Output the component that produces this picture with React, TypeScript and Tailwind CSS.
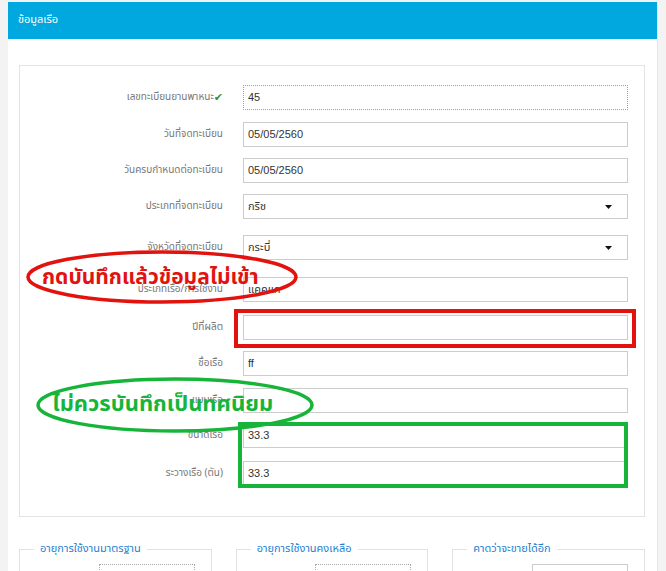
import React from "react"

const font = { fontFamily: "Tahoma, 'Noto Sans Thai', 'Noto Sans', 'DejaVu Sans', sans-serif" }

type Row = { label: string; value?: string; kind?: "dotted" | "select" | "text"; check?: boolean; mt: string }

const rows: Row[] = [
  { label: "เลขทะเบียนยานพาหนะ", value: "45", kind: "dotted", check: true, mt: "mt-[19px]" },
  { label: "วันที่จดทะเบียน", value: "05/05/2560", mt: "mt-[12px]" },
  { label: "วันครบกำหนดต่อทะเบียน", value: "05/05/2560", mt: "mt-[11px]" },
  { label: "ประเภทที่จดทะเบียน", value: "กริช", kind: "select", mt: "mt-[11px]" },
  { label: "จังหวัดที่จดทะเบียน", value: "กระบี่", kind: "select", mt: "mt-[16px]" },
  { label: "ประเภทเรือ/การใช้งาน", value: "แคคแค", mt: "mt-[17px]" },
  { label: "ปีที่ผลิต", value: "", mt: "mt-[13px]" },
  { label: "ชื่อเรือ", value: "ff", mt: "mt-[11px]" },
  { label: "แบบเรือ", value: "", mt: "mt-[12px]" },
  { label: "ขนาดเรือ", value: "33.3", mt: "mt-[10px]" },
  { label: "ระวางเรือ (ตัน)", value: "33.3", mt: "mt-[13px]" },
]

function FormRow({ row }: { row: Row }) {
  const box =
    row.kind === "dotted"
      ? "border border-dotted border-[#9aa59a]"
      : "border border-[#cccccc]"
  return (
    <div className={`flex items-center ${row.mt}`}>
      <div className="w-[203px] text-right text-[10px] text-[#777] flex justify-end items-center" style={font}>
        <span>{row.label}</span>
        {row.check && <span className="text-[#3a8f3a] text-[11px] leading-none">✔</span>}
      </div>
      <div className={`ml-[20px] w-[385px] h-[25px] bg-white flex items-center justify-between pl-[4px] pr-[15px] text-[11px] text-[#333] ${box}`} style={{ fontFamily: "'Liberation Sans', Tahoma, 'Noto Sans Thai', sans-serif" }}>
        <span>{row.value}</span>
        {row.kind === "select" && (
          <svg width="7" height="4" viewBox="0 0 7 4"><path d="M0 0h7L3.5 4z" fill="#111" /></svg>
        )}
      </div>
    </div>
  )
}

function Group({ title, boxClass }: { title: string; boxClass: string }) {
  return (
    <fieldset className="border border-[#e2e2e2] pl-[14px] pr-[16px] h-[60px] min-w-0">
      <legend className="px-[6px] text-[11px] text-[#1f7fd1]" style={font}>{title}</legend>
      <div className="flex justify-end mt-[6px]">
        <div className={`w-[96px] h-[20px] ${boxClass}`} />
      </div>
    </fieldset>
  )
}

export default function App() {
  return (
    <div className="relative w-[666px] h-[571px] overflow-hidden bg-[#f3f3f3] pt-[2px] pl-[8px] pr-[8px]" style={font}>
      <div className="bg-white h-[600px] border-r border-[#e8e8e8]">
        <div className="h-[37px] bg-[#00a8df] flex items-center pl-[10px] text-[11px] text-white">ข้อมูลเรือ</div>
        <div className="pl-[11px] pr-[12px] pt-[26px]">
          <div className="h-[452px] border border-[#e3e3e3] flex flex-col">
            {rows.map((r) => (
              <FormRow key={r.label} row={r} />
            ))}
          </div>
          <div className="grid grid-cols-3 gap-x-[24px] mt-[24px]">
            <Group title="อายุการใช้งานมาตรฐาน" boxClass="border border-dotted border-[#aaa]" />
            <Group title="อายุการใช้งานคงเหลือ" boxClass="border border-dotted border-[#aaa]" />
            <Group title="คาดว่าจะขายได้อีก" boxClass="border border-[#ccc]" />
          </div>
        </div>
      </div>

      {/* annotations */}
      <svg className="absolute left-0 top-0 pointer-events-none" width="666" height="571">
        <ellipse cx="162" cy="277" rx="134" ry="25" fill="none" stroke="#e2130f" strokeWidth="3.5" />
        <ellipse cx="175" cy="405" rx="137" ry="26" fill="none" stroke="#16b53a" strokeWidth="3.5" />
      </svg>
      <div className="absolute left-[234px] top-[309px] w-[402px] h-[39px] border-[4px] border-[#e2130f]" />
      <div className="absolute left-[238px] top-[422px] w-[390px] h-[66px] border-[4px] border-[#16b53a]" />
      <div className="absolute left-[42px] top-[263px] text-[21px] font-bold leading-[30px] text-[#e2130f]" style={font}>
        กดบันทึกแล้วข้อมูลไม่เข้า
      </div>
      <div className="absolute left-[52px] top-[390px] text-[22px] font-bold leading-[30px] text-[#16b53a]" style={font}>
        ไม่ควรบันทึกเป็นทศนิยม
      </div>
    </div>
  )
}
